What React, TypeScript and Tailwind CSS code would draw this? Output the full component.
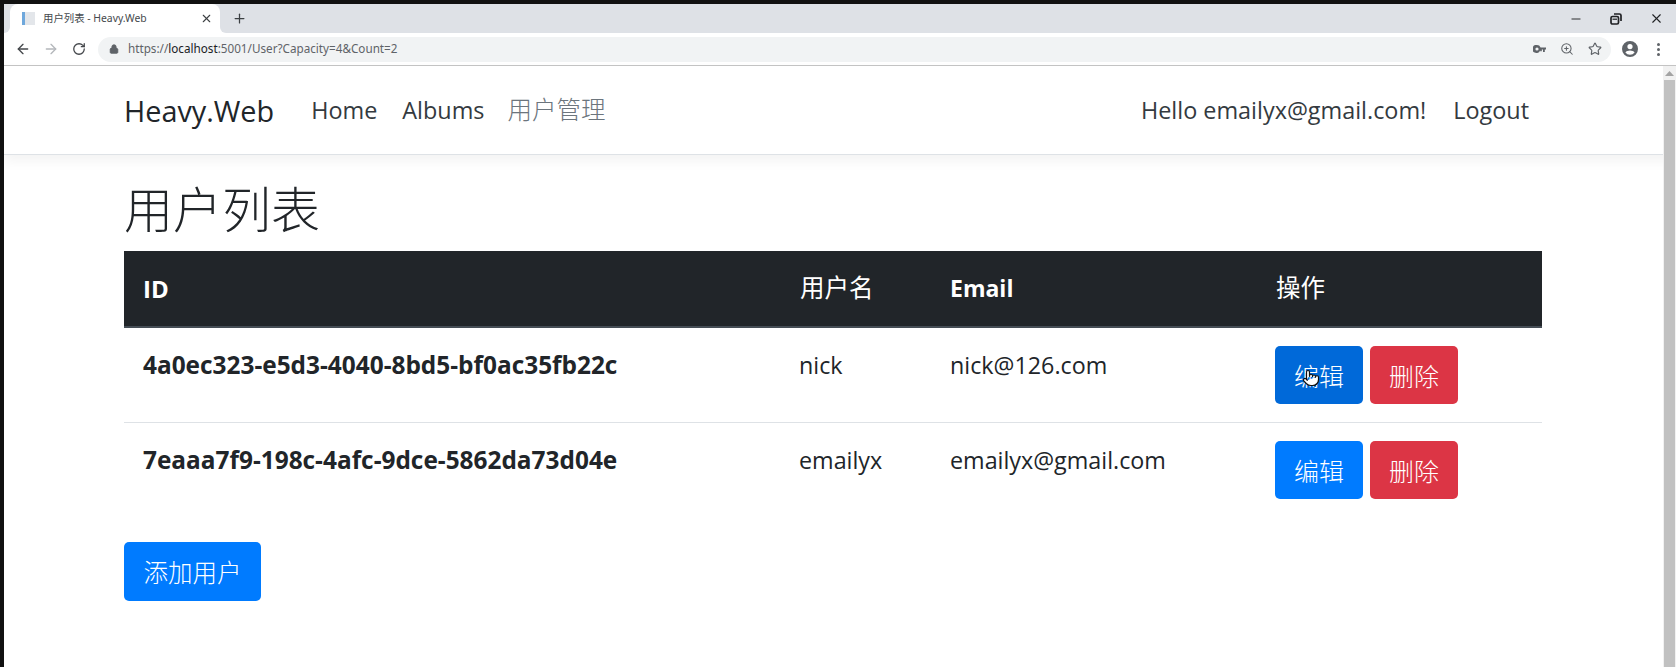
import React from "react"
import { ArrowLeft, ArrowRight, RotateCw, Lock, X, Plus, Minus, ZoomIn, Star, Pointer } from "lucide-react"

const sans = "font-['Open_Sans','Noto_Sans_CJK_SC',sans-serif]"

type User = { id: string; name: string; email: string; hover?: boolean }

const users: User[] = [
   { id: "4a0ec323-e5d3-4040-8bd5-bf0ac35fb22c", name: "nick", email: "nick@126.com", hover: true },
   { id: "7eaaa7f9-198c-4afc-9dce-5862da73d04e", name: "emailyx", email: "emailyx@gmail.com" },
]

function TabFlare({ side }: { side: "left" | "right" }) {
   return <div className="h-[7px] w-[6px] bg-white">
      <div className={`h-full w-full bg-[#dee1e6] ${side === "left" ? "rounded-br-[6px]" : "rounded-bl-[6px]"}`}/>
   </div>
}

function RestoreIcon() {
   return <svg width="14" height="14" viewBox="0 0 14 14" fill="none" stroke="#202124" strokeWidth="1.7">
      <rect x="2" y="4.5" width="7.5" height="7.5" rx="1.5"/>
      <path d="M5 2h5.5A1.5 1.5 0 0 1 12 3.500V9"/>
      <path d="M3.500 7.200h4.500" strokeWidth="1.2"/>
   </svg>
}

function KeyIcon() {
   return <svg width="13" height="8" viewBox="0 0 13 8" fill="#5f6368">
      <path fillRule="evenodd" d="M4 0a4 4 0 0 1 3.6 2.4H13v2.2h-1.2V7H10V4.6H8.8V6.2H7.2V5.2A4 4 0 1 1 4 0Zm0 2.4a1.6 1.6 0 1 0 0 3.2 1.6 1.6 0 0 0 0-3.2Z"/>
   </svg>
}

function AvatarIcon() {
   return <svg width="16" height="16" viewBox="0 0 16 16" fill="#5f6368">
      <path fillRule="evenodd" d="M8 0a8 8 0 1 1 0 16A8 8 0 0 1 8 0Zm0 3a2.6 2.6 0 1 0 0 5.2A2.6 2.6 0 0 0 8 3Zm0 6.6c-1.9 0-3.7.7-4.6 1.8A5.8 5.8 0 0 0 8 13.8a5.8 5.8 0 0 0 4.6-2.4c-.9-1.1-2.7-1.8-4.6-1.8Z"/>
   </svg>
}

function DotsIcon() {
   return <svg width="15" height="15" viewBox="0 0 15 15" fill="#5f6368">
      <circle cx="7.5" cy="2.5" r="1.5"/>
      <circle cx="7.5" cy="7.5" r="1.5"/>
      <circle cx="7.5" cy="12.5" r="1.5"/>
   </svg>
}

function BrowserChrome() {
   return <div className="shrink-0">
      <div className="flex h-[29px] items-end bg-[#dee1e6] text-[#3c4043]">
         <TabFlare side="left"/>
         <div className="flex h-[29px] w-[210px] items-center rounded-t-lg bg-white pl-[12px] pr-[7px]">
            <div className="mr-[8px] h-[13px] w-[13px] border-l-[3px] border-[#6fa8dc] bg-[#e3e6ea]"/>
            <span className="flex-1 font-['Noto_Sans','Noto_Sans_CJK_SC',sans-serif] text-[10.4px] text-[#45494d]">用户列表 - Heavy.Web</span>
            <X size={13} strokeWidth={2}/>
         </div>
         <TabFlare side="right"/>
         <div className="ml-[6px] flex h-[29px] items-center">
            <Plus size={15} strokeWidth={2}/>
         </div>
         <div className="ml-auto flex h-[29px] items-center gap-[26px] pr-[12px] text-[#202124]">
            <Minus size={14} strokeWidth={1.6}/>
            <RestoreIcon/>
            <X size={15} strokeWidth={1.8}/>
         </div>
      </div>
      <div className="flex h-[33px] items-center border-b border-[#c4c4c4] bg-white pl-[11px] pr-[10px] text-[#5f6368]">
         <ArrowLeft size={16} strokeWidth={2} className="text-[#44474b]"/>
         <ArrowRight size={16} strokeWidth={2} className="ml-[12px] text-[#b4b7bb]"/>
         <RotateCw size={14} strokeWidth={2.2} className="ml-[13px] text-[#44474b]"/>
         <div className="ml-[12px] flex h-[25px] flex-1 items-center rounded-full bg-[#f1f3f4] pl-[11px] pr-[9px]">
            <Lock size={10} fill="currentColor" strokeWidth={2.4}/>
            <span className="ml-[9px] flex-1 font-['Noto_Sans',sans-serif] text-[11.7px] text-[#5f6368]">
               https://<span className="text-[#202124]">localhost</span>:5001/User?Capacity=4&amp;Count=2
            </span>
            <KeyIcon/>
            <ZoomIn size={14} strokeWidth={1.8} className="ml-[14px]"/>
            <Star size={14} strokeWidth={2} className="ml-[14px]"/>
         </div>
         <div className="ml-[11px]"><AvatarIcon/></div>
         <div className="ml-[13px]"><DotsIcon/></div>
      </div>
   </div>
}

function Navbar() {
   return <nav className={`relative flex h-[89px] items-center border-b border-[#dee2e6] bg-white pl-[120px] pr-[147px] pt-[1px] text-[23.4px] text-[#343a40] shadow-[0_6px_12px_rgba(0,0,0,0.05)] ${sans}`}>
      <span className="text-[28.8px] text-[#212529]">Heavy.Web</span>
      <a className="ml-[37px]">Home</a>
      <a className="ml-[25px]">Albums</a>
      <a className="ml-[23px] text-[24.5px] font-light text-[#6c757d]">用户管理</a>
      <span className="ml-auto">Hello emailyx@gmail.com!</span>
      <a className="ml-[27px]">Logout</a>
   </nav>
}

function ActionButton({ label, className, hover }: { label: string; className: string; hover?: boolean }) {
   return <button className={`relative h-[58px] w-[88px] rounded-[5px] pt-[3px] text-[25px] font-light text-white ${className}`}>
      {label}
      {hover && <Pointer size={18} fill="white" stroke="#111" strokeWidth={1.6} className="absolute left-[27px] top-[23px]"/>}
   </button>
}

function UserTable() {
   return <table className="w-full table-fixed border-collapse text-[23.3px] text-[#212529]">
      <colgroup>
         <col className="w-[657px]"/>
         <col className="w-[151px]"/>
         <col className="w-[326px]"/>
         <col/>
      </colgroup>
      <thead>
         <tr className="h-[76px] border-b-2 border-[#454d55] bg-[#212529] text-left text-white">
            <th className="pl-[19px] text-[24px] font-bold">ID</th>
            <th className="pl-[19px] text-[24.5px] font-normal">用户名</th>
            <th className="pl-[18px] text-[23px] font-bold">Email</th>
            <th className="pl-[18px] text-[24.5px] font-normal">操作</th>
         </tr>
      </thead>
      <tbody>
         {users.map(user => <tr key={user.id} className="h-[95px] border-b border-[#dee2e6] last:border-b-0">
            <td className="pb-[19px] pl-[19px] text-[24.4px] font-bold">{user.id}</td>
            <td className="pb-[19px] pl-[18px]">{user.name}</td>
            <td className="pb-[19px] pl-[18px]">{user.email}</td>
            <td className="pl-[17px]">
               <div className="flex gap-[7px]">
                  <ActionButton label="编辑" hover={user.hover} className={user.hover ? "bg-[#0069d9]" : "bg-[#007bff]"}/>
                  <ActionButton label="删除" className="bg-[#dc3545]"/>
               </div>
            </td>
         </tr>)}
      </tbody>
   </table>
}

function Scrollbar() {
   return <div className="absolute right-0 top-0 bottom-0 z-10 flex w-[13px] flex-col items-center bg-[#f1f1f1]">
      <svg width="9" height="5" viewBox="0 0 9 5" fill="#a3a3a3" className="mt-[5px]">
         <path d="M4.5 0 9 5H0Z"/>
      </svg>
      <div className="mt-[4px] w-[11px] flex-1 bg-[#c1c1c1]"/>
   </div>
}

function App() {
   return <div className="h-[667px] overflow-hidden border-l-4 border-t-4 border-[#111] bg-white">
      <BrowserChrome/>
      <div className="relative h-[601px]">
         <Scrollbar/>
         <Navbar/>
         <main className={`pl-[120px] pr-[134px] ${sans}`}>
            <h1 className="mt-[20px] mb-[8px] text-[49px] leading-[68px] font-light text-[#212529]">用户列表</h1>
            <UserTable/>
            <button className="mt-[25px] h-[59px] w-[137px] rounded-[5px] bg-[#007bff] pt-[3px] text-[24.5px] font-light text-white">添加用户</button>
         </main>
      </div>
   </div>
}

export default App
